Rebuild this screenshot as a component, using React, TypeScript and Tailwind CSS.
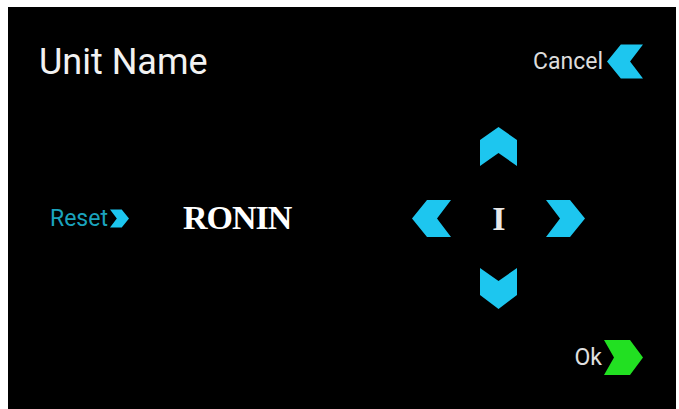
import React from "react";

type ArrowProps = { className?: string; fill: string };

// Chevron shapes used across the panel
function ChevronLeft({ className, fill }: ArrowProps) {
  return (
    <svg viewBox="0 0 39 37" className={className} aria-hidden>
      <polygon points="0,18.5 15,0 39,0 25,18.5 39,37 15,37" fill={fill} />
    </svg>
  );
}

function ChevronRight({ className, fill }: ArrowProps) {
  return (
    <svg viewBox="0 0 39 37" className={className} aria-hidden>
      <polygon points="39,18.5 24,0 0,0 14,18.5 0,37 24,37" fill={fill} />
    </svg>
  );
}

function ChevronUp({ className, fill }: ArrowProps) {
  return (
    <svg viewBox="0 0 37 40" className={className} aria-hidden>
      <polygon points="18.5,0 37,13 37,39 18.5,26 0,39 0,13" fill={fill} />
    </svg>
  );
}

function ChevronDown({ className, fill }: ArrowProps) {
  return (
    <svg viewBox="0 0 37 41" className={className} aria-hidden>
      <polygon points="0,0 18.5,13 37,0 37,27 18.5,41 0,27" fill={fill} />
    </svg>
  );
}

const CYAN = "#1dc6ef";
const GREEN = "#22e022";

export default function App() {
  return (
    <div className="w-[679px] h-[409px] bg-white overflow-hidden pt-[7px] pl-[8px] pr-[3px]">
      <div className="h-[402px] bg-black flex flex-col font-['Roboto',sans-serif]">
        {/* Title bar */}
        <div className="flex items-center justify-between pl-[31px] pr-[33px] pt-[36px]">
          <h1 className="text-[36px] leading-none text-[#f2f2f2]">Unit Name</h1>
          <button className="flex items-center gap-[4px]">
            <span className="text-[23px] leading-none text-[#dcdcdc]">Cancel</span>
            <ChevronLeft className="w-[36px] h-[37px]" fill={CYAN} />
          </button>
        </div>

        {/* Name editor */}
        <div className="flex items-center pl-[42px] mt-[47px]">
          <button className="flex items-center gap-[2px]">
            <span className="text-[23px] leading-none text-[#1ba3bd]">Reset</span>
            <ChevronRight className="w-[19px] h-[19px]" fill={CYAN} />
          </button>
          <span className="ml-[54px] font-['Liberation_Serif',serif] font-bold text-[34px] leading-none text-white tracking-[-1px]">
            RONIN
          </span>
          <div className="ml-[121px] flex flex-col items-center">
            <ChevronUp className="w-[37px] h-[40px]" fill={CYAN} />
            <div className="mt-[33px] flex items-center">
              <ChevronLeft className="w-[39px] h-[37px]" fill={CYAN} />
              <span className="w-[95px] text-center font-['Liberation_Serif',serif] font-bold text-[34px] leading-none text-[#e8e8e8]">
                I
              </span>
              <ChevronRight className="w-[39px] h-[37px]" fill={CYAN} />
            </div>
            <ChevronDown className="mt-[31px] w-[37px] h-[41px]" fill={CYAN} />
          </div>
        </div>

        {/* Confirm */}
        <div className="flex items-center justify-end pr-[33px] mt-[31px] gap-[2px]">
          <span className="text-[23px] leading-none text-[#e0e0e0]">Ok</span>
          <svg viewBox="0 0 39 35" className="w-[39px] h-[35px]" aria-hidden>
            <polygon points="0,0 26,0 39,17.5 26,35 0,35 10,17.5" fill={GREEN} />
          </svg>
        </div>
      </div>
    </div>
  );
}
